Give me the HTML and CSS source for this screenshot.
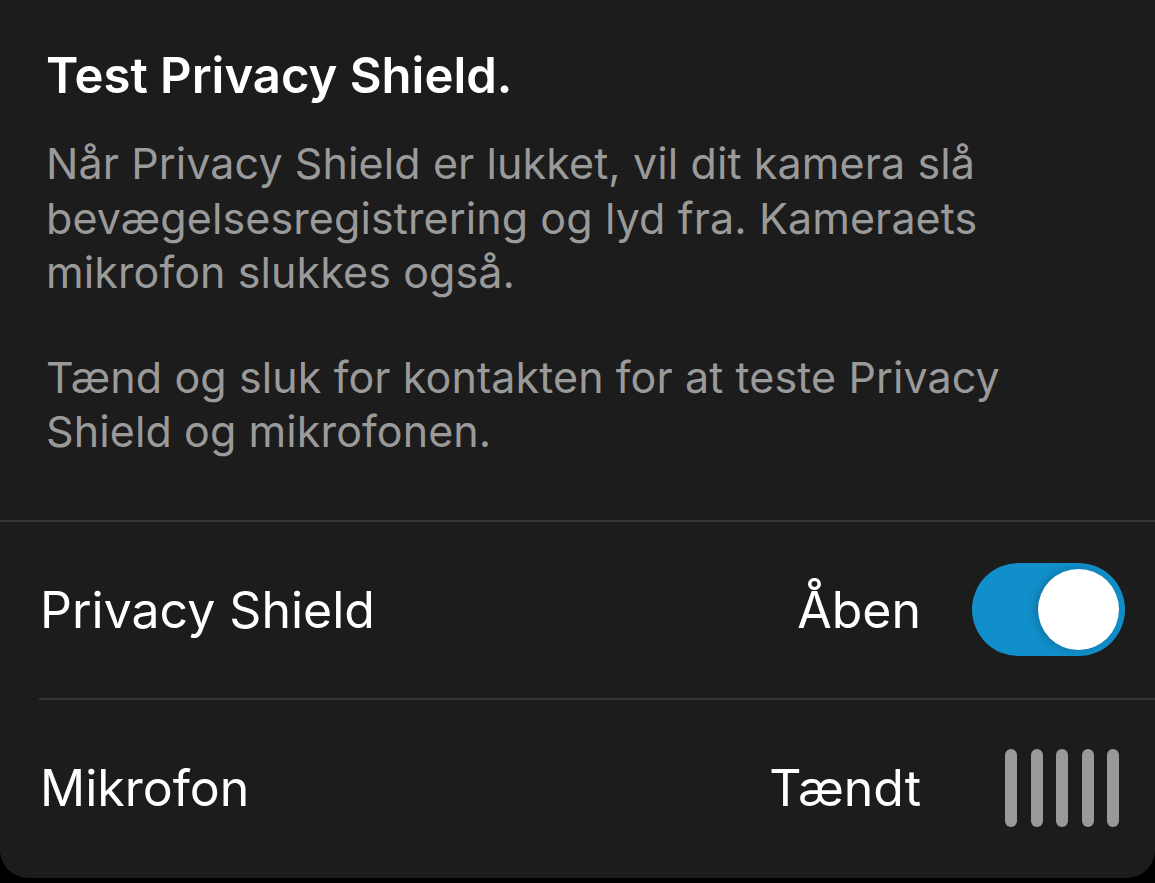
FILE: index.html
```html
<!DOCTYPE html>
<html lang="da">
<head>
    <meta charset="UTF-8">
    <meta name="viewport" content="width=device-width, initial-scale=1.0">
    <title>Test Privacy Shield</title>
    <link rel="stylesheet" href="styles.css">
</head>
<body>
    <div class="sheet">
        <div class="intro">
            <h1 class="title">Test Privacy Shield.</h1>
            <p class="text">Når Privacy Shield er lukket, vil dit kamera slå bevægelsesregistrering og lyd fra. Kameraets mikrofon slukkes også.</p>
            <p class="text">Tænd og sluk for kontakten for at teste Privacy Shield og mikrofonen.</p>
        </div>
        <div class="row row-first">
            <span class="label">Privacy Shield</span>
            <span class="value">Åben</span>
            <div class="switch on"><span class="knob"></span></div>
        </div>
        <div class="row">
            <span class="label">Mikrofon</span>
            <span class="value">Tændt</span>
            <div class="levels">
                <span class="bar"></span>
                <span class="bar"></span>
                <span class="bar"></span>
                <span class="bar"></span>
                <span class="bar"></span>
            </div>
        </div>
    </div>
</body>
</html>
```

FILE: styles.css
```css
body {
    margin: 0;
    background-color: #000;
    font-family: Inter, "Noto Sans", sans-serif;
    height: 883px;
    overflow: hidden;
}
.sheet {
    background-color: #1c1c1c;
    height: 878px;
    border-radius: 0 0 28px 28px;
    overflow: hidden;
}
.intro {
    padding: 48px 130px 61px 46px;
    border-bottom: 2px solid #363636;
}
.title {
    margin: 0 0 32px;
    font-size: 49px;
    line-height: 56px;
    font-weight: 600;
    color: #fff;
}
.text {
    margin: 0;
    font-size: 43px;
    line-height: 54.5px;
    letter-spacing: 0.1px;
    color: #9a9a9a;
}
.text + .text {
    margin-top: 50px;
}
.row {
    display: flex;
    align-items: center;
    height: 176px;
    margin-left: 39px;
    padding-left: 1px;
    padding-right: 30px;
    color: #fff;
    font-size: 50px;
}
.row-first {
    border-bottom: 2px solid #363636;
}
.label {
    flex: 1;
}
.value {
    margin-right: 51px;
}
.switch {
    position: relative;
    width: 153px;
    height: 93px;
    border-radius: 47px;
    background-color: #118fca;
}
.knob {
    position: absolute;
    top: 6px;
    right: 6px;
    width: 81px;
    height: 81px;
    border-radius: 50%;
    background-color: #fff;
    box-shadow: -3px 0 8px rgba(0, 0, 0, 0.2);
}
.levels {
    display: flex;
    gap: 13.5px;
    margin-left: 33px;
    margin-right: 6px;
}
.bar {
    width: 12px;
    height: 78px;
    border-radius: 6px;
    background-color: #999;
}
```
